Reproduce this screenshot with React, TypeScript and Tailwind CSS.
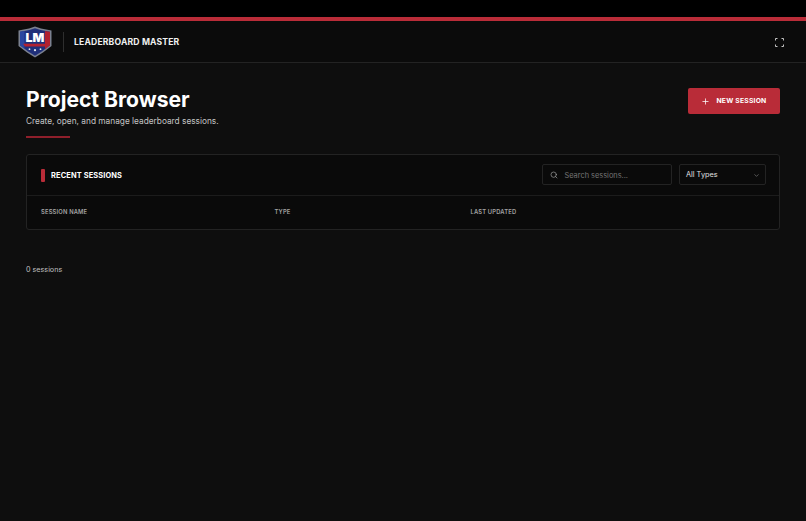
import { Plus, Search, ChevronDown } from "lucide-react";

function Logo() {
  return (
    <svg width="36" height="32" viewBox="0 0 36 32" className="shrink-0">
      <path d="M12 2.5 L18 0.5 L24 2.5 L34.5 4.5 L34.5 20 L26 26.5 L18 31.5 L10 26.5 L1.5 20 L1.5 4.5 Z" fill="#7b8190" />
      <path d="M12.5 4 L18 2.2 L23.5 4 L33 5.8 L33 19.3 L25.2 25.3 L18 29.8 L10.8 25.3 L3 19.3 L3 5.8 Z" fill="#1f2f7a" />
      <path d="M27 4.9 L33 5.8 L33 19.3 L28 23.2 L28 5.2 Z" fill="#b3212f" />
      <path d="M3 5.8 L7.5 5 L7.5 22.8 L3 19.3 Z" fill="#2a46a0" />
      <path d="M6 17.8 L30 17.8 L28 20.5 L8 20.5 Z" fill="#b3212f" />
      <text x="18" y="16" textAnchor="middle" fontSize="12.4" fontWeight="900" fill="#ffffff" fontFamily="Inter, sans-serif">LM</text>
      <circle cx="12.5" cy="23.2" r="0.9" fill="#e5e7eb" />
      <circle cx="18" cy="24.2" r="1.1" fill="#e5e7eb" />
      <circle cx="23.5" cy="23.2" r="0.9" fill="#e5e7eb" />
    </svg>
  );
}

function Fullscreen() {
  return (
    <svg width="9" height="9" viewBox="0 0 9 9" fill="none" stroke="#c4c4c4" strokeWidth="1" className="mt-px">
      <path d="M0.5 2.5V0.5H2.5M6.5 0.5H8.5V2.5M8.5 6.5V8.5H6.5M2.5 8.5H0.5V6.5" />
    </svg>
  );
}

export default function App() {
  return (
    <div className="flex h-[521px] w-[806px] flex-col overflow-hidden bg-[#0e0e0e] font-['Inter',sans-serif] text-white">
      <div className="h-[17px] shrink-0 bg-black" />
      <div className="h-1 shrink-0 bg-[#b92c38]" />
      <header className="flex h-[42px] shrink-0 items-center justify-between border-b border-[#232323] bg-[#0b0b0b] pl-[17px] pr-[22px]">
        <div className="flex items-center">
          <Logo />
          <div className="ml-[10px] mr-[10px] h-5 w-px bg-[#2e2e2e]" />
          <span className="mt-px text-[8.6px] font-bold leading-none tracking-[0.02em] text-[#f0f0f0]">LEADERBOARD MASTER</span>
        </div>
        <Fullscreen />
      </header>
      <main className="flex flex-1 flex-col px-[26px]">
        <div className="mt-[22px] flex items-start justify-between">
          <div>
            <h1 className="text-[21.1px] font-bold leading-[30px] text-white">Project Browser</h1>
            <p className="text-[8.3px] leading-[12px] text-[#c4c4c4]">Create, open, and manage leaderboard sessions.</p>
            <div className="mt-[9px] h-0.5 w-11 bg-[#8f1f2b]" />
          </div>
          <button className="mt-[3px] flex h-[26px] w-[92px] items-center justify-center gap-[6px] rounded-[2px] bg-[#b92c38] text-[6.8px] font-bold tracking-[0.03em] text-white">
            <Plus size={9} strokeWidth={2} />
            NEW SESSION
          </button>
        </div>
        <section className="mt-[16px] rounded-[3px] border border-[#232323] bg-[#0a0a0a]">
          <div className="flex h-[41px] items-center justify-between border-b border-[#1c1c1c] pb-px pl-[13.5px] pr-[13px]">
            <div className="flex items-center gap-[6.5px]">
              <div className="mt-px h-[13px] w-1 rounded-[1px] bg-[#b92c38]" />
              <span className="mt-[2px] text-[7.4px] font-bold tracking-[0.02em] text-white">RECENT SESSIONS</span>
            </div>
            <div className="flex items-center gap-[7px]">
              <div className="flex h-[21px] w-[130px] items-center gap-[6.5px] rounded-[2px] border border-[#232323] pl-[7px]">
                <Search size={8} className="mt-px text-[#a3a3a3]" />
                <span className="mt-[2px] text-[7.4px] text-[#757575]">Search sessions...</span>
              </div>
              <div className="flex h-[21px] w-[87px] items-center justify-between rounded-[2px] border border-[#232323] pl-[6px] pr-[5.5px]">
                <span className="mt-[2px] text-[7.3px] text-[#e0e0e0]">All Types</span>
                <ChevronDown size={7} className="mt-px text-[#8a8a8a]" />
              </div>
            </div>
          </div>
          <div className="flex h-[33px] items-center pl-[14px] text-[5.8px] font-semibold tracking-[0.03em] text-[#a3a3a3]">
            <span className="w-[233.5px]">SESSION NAME</span>
            <span className="w-[196px]">TYPE</span>
            <span>LAST UPDATED</span>
          </div>
        </section>
        <p className="mt-[34px] text-[7.2px] leading-[12px] text-[#c0c0c0]">0 sessions</p>
      </main>
    </div>
  );
}
